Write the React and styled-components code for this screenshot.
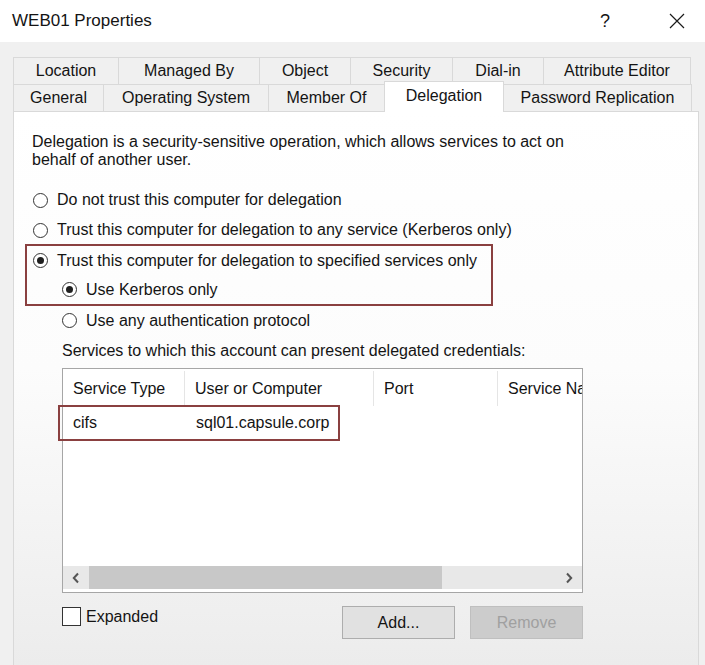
import React from 'react';
import styled, { createGlobalStyle } from 'styled-components';

const GlobalStyle = createGlobalStyle`
  html, body { margin: 0; padding: 0; }
  body {
    font-family: "Liberation Sans", Arial, sans-serif;
    color: #141414;
  }
`;

const topTabs = [
    { label: 'Location', width: 106 },
    { label: 'Managed By', width: 142 },
    { label: 'Object', width: 92 },
    { label: 'Security', width: 103 },
    { label: 'Dial-in', width: 92 },
    { label: 'Attribute Editor', width: 148 },
];

const bottomTabs = [
    { label: 'General', width: 91 },
    { label: 'Operating System', width: 166 },
    { label: 'Member Of', width: 117 },
    { label: 'Delegation', width: 120, active: true },
    { label: 'Password Replication', width: 189 },
];

const columns = [
    { label: 'Service Type', width: 122 },
    { label: 'User or Computer', width: 189 },
    { label: 'Port', width: 124 },
    { label: 'Service Name', width: 140 },
];

export default function App() {
    return (
        <>
            <GlobalStyle />
            <Window>
                <TitleBar>
                    <TitleText>WEB01 Properties</TitleText>
                    <TitleButtons>
                        <TitleButton>?</TitleButton>
                        <TitleButton>
                            <svg width="16" height="16" viewBox="0 0 16 16">
                                <path d="M1 1 L15 15 M15 1 L1 15" stroke="#1a1a1a" strokeWidth="1.2" fill="none" />
                            </svg>
                        </TitleButton>
                    </TitleButtons>
                </TitleBar>

                <Body>
                    <TabRow>
                        {topTabs.map((t) => (
                            <Tab key={t.label} $width={t.width}>{t.label}</Tab>
                        ))}
                    </TabRow>
                    <TabRow>
                        {bottomTabs.map((t) => (
                            <Tab key={t.label} $width={t.width} $active={t.active}>{t.label}</Tab>
                        ))}
                    </TabRow>

                    <Panel>
                        <Description>
                            Delegation is a security-sensitive operation, which allows services to act on behalf of another user.
                        </Description>

                        <RadioGroup>
                            <RadioRow $indent={1}>
                                <Radio />
                                Do not trust this computer for delegation
                            </RadioRow>
                            <RadioRow $indent={1}>
                                <Radio />
                                Trust this computer for delegation to any service (Kerberos only)
                            </RadioRow>
                            <Highlight>
                                <RadioRow $indent={1} $height={29}>
                                    <Radio $checked />
                                    Trust this computer for delegation to specified services only
                                </RadioRow>
                                <RadioRow $indent={30} $height={29}>
                                    <Radio $checked />
                                    Use Kerberos only
                                </RadioRow>
                            </Highlight>
                            <RadioRow $indent={30} $height={29}>
                                <Radio />
                                Use any authentication protocol
                            </RadioRow>
                        </RadioGroup>

                        <Caption>Services to which this account can present delegated credentials:</Caption>

                        <ListView>
                            <ListHeader>
                                {columns.map((c, i) => (
                                    <HeaderCell key={c.label} $width={c.width}>{c.label}</HeaderCell>
                                ))}
                            </ListHeader>
                            <ListRow $highlight>
                                <RowCell $width={125} $pad={13}>cifs</RowCell>
                                <RowCell $width={150} $pad={11}>sql01.capsule.corp</RowCell>
                            </ListRow>
                            <ListFill />
                            <ScrollBar>
                                <ScrollArrow>
                                    <svg width="8" height="12" viewBox="0 0 8 12">
                                        <path d="M6 1.5 L1.8 6 L6 10.5" stroke="#555" strokeWidth="2" fill="none" />
                                    </svg>
                                </ScrollArrow>
                                <ScrollTrack>
                                    <ScrollThumb style={{ width: '353px' }} />
                                </ScrollTrack>
                                <ScrollArrow>
                                    <svg width="8" height="12" viewBox="0 0 8 12">
                                        <path d="M2 1.5 L6.2 6 L2 10.5" stroke="#555" strokeWidth="2" fill="none" />
                                    </svg>
                                </ScrollArrow>
                            </ScrollBar>
                        </ListView>

                        <Controls>
                            <CheckLabel>
                                <CheckBox />
                                Expanded
                            </CheckLabel>
                            <Button>Add...</Button>
                            <Button $disabled>Remove</Button>
                        </Controls>
                    </Panel>
                </Body>
            </Window>
        </>
    );
}

const Window = styled.div`
width: 705px;
height: 665px;
overflow: hidden;
background: #f0f0f0;
display: flex;
flex-direction: column;
`;

const TitleBar = styled.div`
height: 42px;
flex-shrink: 0;
background: #ffffff;
display: flex;
align-items: center;
padding-left: 12px;
font-size: 17px;
`;

const TitleText = styled.div`
flex: 1;
`;

const TitleButtons = styled.div`
display: flex;
gap: 26px;
padding-right: 5px;
`;

const TitleButton = styled.div`
width: 46px;
height: 36px;
display: flex;
align-items: center;
justify-content: center;
font-size: 18px;
`;

const Body = styled.div`
flex: 1;
display: flex;
flex-direction: column;
padding: 15px 6px 0 13px;
`;

const TabRow = styled.div`
display: flex;
height: 27px;
flex-shrink: 0;
align-items: flex-end;
`;

const Tab = styled.div`
box-sizing: border-box;
width: ${p => p.$width}px;
height: ${p => (p.$active ? 31 : 27)}px;
margin-bottom: ${p => (p.$active ? -1 : 0)}px;
margin-left: -1px;
padding-bottom: ${p => (p.$active ? 3 : 0)}px;
border: 1px solid #d9d9d9;
border-bottom: none;
background: ${p => (p.$active ? '#ffffff' : '#f0f0f0')};
position: relative;
z-index: ${p => (p.$active ? 2 : 0)};
display: flex;
align-items: center;
justify-content: center;
font-size: 16px;
white-space: nowrap;
&:first-child { margin-left: 0; }
`;

const Panel = styled.div`
flex: 1;
margin-bottom: -20px;
border: 1px solid #d9d9d9;
background: linear-gradient(180deg, #ffffff 0%, #fcfcfc 45%, #ebebeb 100%);
padding: 21px 0 0 18px;
display: flex;
flex-direction: column;
font-size: 16px;
`;

const Description = styled.div`
width: 570px;
line-height: 18px;
`;

const RadioGroup = styled.div`
margin-top: 16px;
display: flex;
flex-direction: column;
`;

const RadioRow = styled.div`
height: ${p => p.$height ?? 30}px;
display: flex;
align-items: center;
gap: 9px;
padding-left: ${p => p.$indent}px;
white-space: nowrap;
`;

const Radio = styled.span`
box-sizing: border-box;
width: 15px;
height: 15px;
flex-shrink: 0;
border-radius: 50%;
border: 1px solid #333333;
background: #ffffff;
display: flex;
align-items: center;
justify-content: center;
&::after {
  content: '';
  display: ${p => (p.$checked ? 'block' : 'none')};
  width: 7px;
  height: 7px;
  border-radius: 50%;
  background: #1f1f1f;
}
`;

const Highlight = styled.div`
width: 468px;
box-sizing: border-box;
margin: -1px 0 0 -7px;
padding: 0 0 0 5px;
border: 2px solid #8a4040;
`;

const Caption = styled.div`
margin: 7px 0 0 30px;
line-height: 18px;
`;

const ListView = styled.div`
box-sizing: border-box;
width: 521px;
height: 225px;
flex-shrink: 0;
margin: 8px 0 0 30px;
border: 1px solid #a6a6a6;
background: #ffffff;
display: flex;
flex-direction: column;
`;

const ListHeader = styled.div`
height: 38px;
flex-shrink: 0;
display: flex;
overflow: hidden;
`;

const HeaderCell = styled.div`
box-sizing: border-box;
flex-shrink: 0;
width: ${p => p.$width}px;
margin: 2px 0 1px;
padding-left: 10px;
border-right: 1px solid #e5e5e5;
display: flex;
align-items: center;
white-space: nowrap;
overflow: hidden;
`;

const ListRow = styled.div`
box-sizing: border-box;
height: 36px;
width: 282px;
margin: -2px 0 0 -5px;
border: 2px solid ${p => (p.$highlight ? '#8a4040' : 'transparent')};
display: flex;
align-items: center;
`;

const RowCell = styled.div`
box-sizing: border-box;
width: ${p => p.$width}px;
padding-left: ${p => p.$pad}px;
white-space: nowrap;
`;

const ListFill = styled.div`
flex: 1;
`;

const ScrollBar = styled.div`
height: 23px;
margin-bottom: 3px;
display: flex;
background: #e8e8e8;
`;

const ScrollArrow = styled.div`
width: 26px;
display: flex;
align-items: center;
justify-content: center;
`;

const ScrollTrack = styled.div`
flex: 1;
display: flex;
`;

const ScrollThumb = styled.div`
background: #c8c8c8;
`;

const Controls = styled.div`
width: 521px;
margin: 13px 0 0 30px;
display: flex;
align-items: flex-start;
gap: 15px;
`;

const CheckLabel = styled.div`
flex: 1;
height: 21px;
display: flex;
align-items: center;
gap: 5px;
`;

const CheckBox = styled.span`
box-sizing: border-box;
width: 19px;
height: 19px;
border: 1px solid #333333;
background: #ffffff;
`;

const Button = styled.div`
box-sizing: border-box;
width: 113px;
height: 33px;
border: 1px solid ${p => (p.$disabled ? '#bfbfbf' : '#adadad')};
background: ${p => (p.$disabled ? '#cccccc' : '#e1e1e1')};
color: ${p => (p.$disabled ? '#a0a0a0' : '#141414')};
display: flex;
align-items: center;
justify-content: center;
`;
